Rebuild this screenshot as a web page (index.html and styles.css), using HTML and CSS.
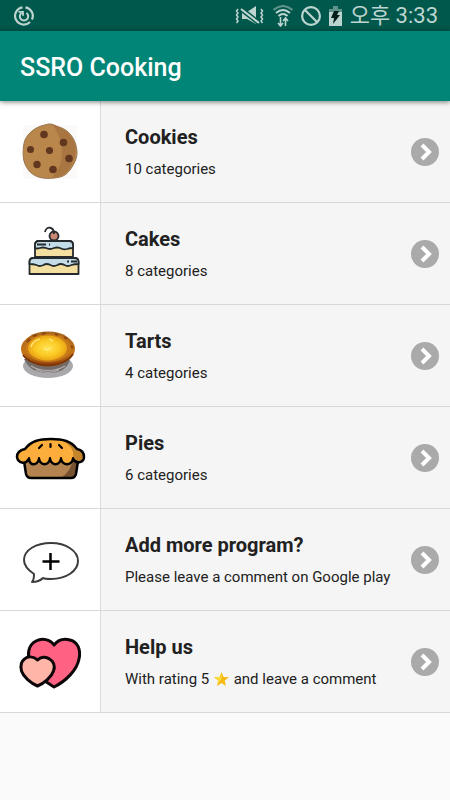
FILE: index.html
```
<!DOCTYPE html>
<html lang="en">

<head>
    <meta charset="utf-8">
    <meta name="viewport" content="width=device-width, initial-scale=1">
    <title>SSRO Cooking</title>
    <link rel="stylesheet" href="styles.css">
</head>

<body>
    <div class="status_bar">
        <svg class="status_power" width="20" height="20" viewBox="0 0 20 20" fill="none" stroke="#bdd5d0">
            <path d="M8.500 1.300A8.700 8.700 0 1 0 16 16M18 13.500A8.700 8.700 0 0 0 11.500 1.300" stroke-width="2.200" />
            <path d="M7.500 7A4.200 4.200 0 1 0 12.500 7" stroke-width="2" />
            <path d="M4.500 5.800h4.500v4" stroke-width="1.800" />
        </svg>
        <div class="status_icons">
            <svg width="30" height="20" viewBox="0 0 30 20" fill="none" stroke="#bdd5d0">
                <path d="M3 3l-1.500 2L3 7 1.500 9 3 11l-1.500 2L3 15l-1.500 2M26 3l1.500 2L26 7l1.500 2-1.500 2 1.500 2-1.500 2 1.500 2" stroke-width="1.500" />
                <path d="M7 6h5l9-6v18l-9-5H7z" fill="#bdd5d0" stroke="none" />
                <path d="M6 3l18 14" stroke="#00574b" stroke-width="5" />
                <path d="M6 3l18 14" stroke-width="2.200" />
            </svg>
            <svg width="20" height="22" viewBox="0 0 20 22" fill="none" stroke="#bdd5d0">
                <path d="M0.500 5Q10-3 19.500 5" stroke="#5f9289" stroke-width="2" />
                <path d="M3 8Q10 2 17 8M5.500 11Q10 7 14.500 11" stroke-width="2" />
                <path d="M7.500 12v8M12.500 21v-8M5 18l2.500 3 2.500-3M10 16l2.500-3 2.500 3" stroke-width="1.600" />
            </svg>
            <svg width="20" height="20" viewBox="0 0 20 20" fill="none" stroke="#bdd5d0" stroke-width="2.200">
                <circle cx="10" cy="10" r="8.900" />
                <path d="M4 4l12 12" />
            </svg>
            <svg width="13" height="20" viewBox="0 0 13 20">
                <path d="M4 0h5v3h4v4H0V3h4z" fill="#5f9289" />
                <path d="M0 6h13v14H0z" fill="#bdd5d0" />
                <path d="M5 5h5L8 9h3l-7 9 1-6H2z" fill="#001f19" />
            </svg>
            <span class="clock">오후 3:33</span>
        </div>
    </div>
    <header class="app_bar">
        <h1 class="app_title">SSRO Cooking</h1>
    </header>

    <main class="list">
        <a class="item" href="#cookies">
            <div class="picture">
                <svg viewBox="0 0 100 101">
                    <path d="M23 24h54v54H23z" fill="#fbfaf9" />
                    <path d="M41 25c4-1 5-2 9-2 4 0 5 2 9 3 7 2 12 7 15 13 2 4 3 9 3 13 0 5-2 9-5 14-3 5-7 9-12 10-8 2-18 2-24-1-5-2-9-7-11-12-3-7-2-19 0-24 3-7 10-12 16-14z" fill="#b9864b" stroke="#997650" />
                    <path d="M53 24c6 9 9 17 9 28 0 9-3 17-10 24 3 1 6 0 9-1 6-3 10-9 12-14 4-9 3-18-1-24-4-7-11-11-19-13z" fill="#a97540" />
                    <g fill="#62371f">
                        <circle cx="44" cy="33.500" r="3.800" />
                        <circle cx="63.500" cy="41.500" r="3.800" />
                        <circle cx="30.500" cy="48.500" r="3.500" />
                        <circle cx="49.500" cy="49.500" r="3.600" />
                        <circle cx="69" cy="57.500" r="3.800" />
                        <circle cx="37" cy="63.500" r="3.700" />
                        <circle cx="53" cy="68.500" r="3.800" />
                    </g>
                </svg>
            </div>
            <div class="text">
                <h2 class="name">Cookies</h2>
                <p class="comment">10 categories</p>
            </div>
            <svg class="arrow" viewBox="0 0 28 28">
                <circle cx="14" cy="14" r="14" fill="#aaa" />
                <path d="M11 7l7 7-7 7" fill="none" stroke="#fff" stroke-width="4" />
            </svg>
        </a>

        <a class="item" href="#cakes">
            <div class="picture">
                <svg viewBox="0 0 100 101" stroke="#252a2d" stroke-width="1.800" stroke-linejoin="round">
                    <path d="M35 54V42q0-4 4-4h30q4 0 4 4v12z" fill="#f3e0a0" />
                    <path d="M35 45v-3q0-4 4-4h30q4 0 4 4v3q-3 0-6 1-4 1-7-1-3-1-6 0-4 2-8 0-3-1-6 0-3 1-5 0z" fill="#c3dce8" />
                    <path d="M29.500 71V59q0-4 4-4h41q4 0 4 4v12z" fill="#f3e0a0" />
                    <path d="M29.500 61v-2q0-4 4-4h41q4 0 4 4v2q-4 0-7 1-4 2-7 0-4-2-7 0-4 2-7 0-4-2-7 0-4 2-7 0-3-1-7-1z" fill="#c3dce8" />
                    <circle cx="54" cy="33" r="4.500" fill="#c98673" />
                    <path d="M45 29c1-6 9-6 9 2M37 41.500h9M49 41.500h1M67 58.500h2M71 58.500h6" fill="none" />
                </svg>
            </div>
            <div class="text">
                <h2 class="name">Cakes</h2>
                <p class="comment">8 categories</p>
            </div>
            <svg class="arrow" viewBox="0 0 28 28">
                <circle cx="14" cy="14" r="14" fill="#aaa" />
                <path d="M11 7l7 7-7 7" fill="none" stroke="#fff" stroke-width="4" />
            </svg>
        </a>

        <a class="item" href="#tarts">
            <div class="picture">
                <svg viewBox="0 0 100 101">
                    <defs>
                        <radialGradient id="custard">
                            <stop offset="0" stop-color="#ffe351" />
                            <stop offset="0.600" stop-color="#fbca25" />
                            <stop offset="1" stop-color="#eba414" />
                        </radialGradient>
                        <linearGradient id="crust" x2="0" y2="1">
                            <stop offset="0" stop-color="#a9651f" />
                            <stop offset="0.600" stop-color="#c47316" />
                            <stop offset="1" stop-color="#8d3e0a" />
                        </linearGradient>
                    </defs>
                    <ellipse cx="48" cy="61" rx="25" ry="12" fill="#a9a9ab" />
                    <path d="M24 54c4 9 12 14 24 14s19-4 22-13z" fill="#716b6a" />
                    <path d="M31 61c10 6 24 6 34 0M36 65c8 3 16 3 23 0" fill="none" stroke="#b5aeae" stroke-width="1.200" />
                    <ellipse cx="48" cy="44" rx="27" ry="17.500" fill="url(#crust)" />
                    <path d="M23 50c9 13 40 14 50-1" fill="none" stroke="#76330b" stroke-width="1.500" />
                    <ellipse cx="48" cy="43" rx="23" ry="14" fill="#c87a18" />
                    <path d="M27 37l3-3M33 31l4-1M42 29l4-1M55 29l3 1M64 32l3 2M71 41l2 2" stroke="#87490f" stroke-width="2" />
                    <ellipse cx="47.500" cy="43" rx="19.500" ry="12.500" fill="url(#custard)" />
                    <path d="M31 42c1-5 5-7 9-8M49 34l4 2M44 43l3 2 4-2" fill="none" stroke="#fff08a" stroke-width="1.200" />
                </svg>
            </div>
            <div class="text">
                <h2 class="name">Tarts</h2>
                <p class="comment">4 categories</p>
            </div>
            <svg class="arrow" viewBox="0 0 28 28">
                <circle cx="14" cy="14" r="14" fill="#aaa" />
                <path d="M11 7l7 7-7 7" fill="none" stroke="#fff" stroke-width="4" />
            </svg>
        </a>

        <a class="item" href="#pies">
            <div class="picture">
                <svg viewBox="0 0 100 101" stroke-linejoin="round" stroke-linecap="round">
                    <path d="M24 54l2 13q1 4 5 4h40q4 0 5-4l2-13z" fill="#b38350" />
                    <path d="M73 52q-2 12-11 18h9q4 0 5-4l2-12z" fill="#775331" />
                    <path d="M24 54l2 13q1 4 5 4h40q4 0 5-4l2-13" fill="none" stroke="#000" stroke-width="2.500" />
                    <path d="M25 42C31 34 39 32 51 32s20 2 26 10c5 1 7 4 7 8 0 5-7 8-11 2-2 7-10 7-12 0-2 7-9 7-11 0-2 7-9 7-11 0-2 7-9 7-10 0-4 6-11 4-12-2 0-4 3-7 8-8z" fill="#fcad3c" />
                    <path d="M62 33c11 7 12 12 11 19 4 6 11 3 11-2 0-4-2-7-7-8-4-5-8-8-15-9z" fill="#c3842c" />
                    <path d="M25 42C31 34 39 32 51 32s20 2 26 10c5 1 7 4 7 8 0 5-7 8-11 2-2 7-10 7-12 0-2 7-9 7-11 0-2 7-9 7-11 0-2 7-9 7-10 0-4 6-11 4-12-2 0-4 3-7 8-8z" fill="none" stroke="#000" stroke-width="2.500" />
                    <path d="M29 52v-1M39 52v-1M50 52v-1M61 52v-1M73 52v-1M39 41l3-3M50.500 37v3M59 38l3 3" stroke="#000" stroke-width="2.200" />
                </svg>
            </div>
            <div class="text">
                <h2 class="name">Pies</h2>
                <p class="comment">6 categories</p>
            </div>
            <svg class="arrow" viewBox="0 0 28 28">
                <circle cx="14" cy="14" r="14" fill="#aaa" />
                <path d="M11 7l7 7-7 7" fill="none" stroke="#fff" stroke-width="4" />
            </svg>
        </a>

        <a class="item" href="#comment">
            <div class="picture">
                <svg viewBox="0 0 100 101" fill="none">
                    <path d="M34 65c-6-4-10-8-10-14 0-10 12-17 27-17s27 8 27 18-12 18-27 18c-3 0-6 0-8-1-3 3-6 4-11 4 2-2 2-5 2-8z" stroke="#3c3c3c" stroke-width="2" stroke-linejoin="round" />
                    <path d="M42.500 52.500h17M50.500 44v17" stroke="#000" stroke-width="2.500" />
                </svg>
            </div>
            <div class="text">
                <h2 class="name">Add more program?</h2>
                <p class="comment">Please leave a comment on Google play</p>
            </div>
            <svg class="arrow" viewBox="0 0 28 28">
                <circle cx="14" cy="14" r="14" fill="#aaa" />
                <path d="M11 7l7 7-7 7" fill="none" stroke="#fff" stroke-width="4" />
            </svg>
        </a>

        <a class="item" href="#rating">
            <div class="picture">
                <svg viewBox="0 0 100 101" stroke="#0c0608" stroke-width="3" stroke-linejoin="round">
                    <path d="M54 34c-4-6-12-7-18-4-8 4-9 14-6 21 4 9 13 19 24 25 12-6 23-17 25-28 2-9-1-17-9-19-7-2-12 0-16 5z" fill="#ff6283" />
                    <path d="M37.500 49c-4-4-10-4-13-1-4 3-4 8-3 12 2 6 9 12 16 15 7-3 14-9 16-15 2-5 0-10-4-12-4-3-9-2-12 1z" fill="#ffb5a7" />
                </svg>
            </div>
            <div class="text">
                <h2 class="name">Help us</h2>
                <p class="comment">With rating 5
                    <svg class="star" viewBox="0 0 15 14">
                        <path d="M7.500 0l2 5 5.500.3-4.300 3.300L12 14l-4.500-3L3 14l1.300-5.400L0 5.300 5.500 5z" fill="#f5b912" />
                        <path d="M7.500 1v6L3 13l1.300-4.400L0 5.300 5.500 5z" fill="#ffd83a" />
                    </svg>
                    and leave a comment</p>
            </div>
            <svg class="arrow" viewBox="0 0 28 28">
                <circle cx="14" cy="14" r="14" fill="#aaa" />
                <path d="M11 7l7 7-7 7" fill="none" stroke="#fff" stroke-width="4" />
            </svg>
        </a>
    </main>
</body>

</html>
```
FILE: styles.css
```
body {
    margin: 0;
    font-family: Roboto, "Noto Sans CJK KR", sans-serif;
    background-color: #fafafa;
    color: #212121;
}

.status_bar {
    display: flex;
    justify-content: space-between;
    align-items: center;
    height: 31px;
    padding: 0 12px 0 14px;
    background-color: #00574b;
}

.status_icons {
    display: flex;
    align-items: center;
    gap: 8px;
}

.clock {
    font-size: 22px;
    font-weight: 400;
    line-height: 30px;
    color: #bdd5d0;
}

.app_bar {
    position: relative;
    display: flex;
    align-items: center;
    height: 70px;
    padding: 0 20px;
    background-color: #008577;
    box-shadow: 0 1px 5px rgba(0, 0, 0, 0.5);
}

.app_title {
    margin: 0;
    padding-top: 2px;
    font-size: 25px;
    font-weight: 500;
    color: #fff;
}

.item {
    display: flex;
    align-items: center;
    background-color: #f5f5f5;
    border-bottom: 1px solid #d8d8d8;
    color: inherit;
    text-decoration: none;
}

.picture {
    flex: none;
    width: 100px;
    background-color: #fff;
    border-right: 1px solid #d5dde2;
}

.picture svg {
    display: block;
    width: 100%;
}

.text {
    flex: 1;
    padding-left: 24px;
}

.name {
    margin: 0;
    font-size: 20px;
    font-weight: 700;
    line-height: 24px;
}

.comment {
    margin: 10px 0 0;
    font-size: 15px;
    line-height: 20px;
}

.star {
    width: 15px;
    height: 14px;
    margin: 0 1px;
    vertical-align: -2px;
}

.arrow {
    flex: none;
    width: 28px;
    height: 28px;
    margin-right: 11px;
}
```
